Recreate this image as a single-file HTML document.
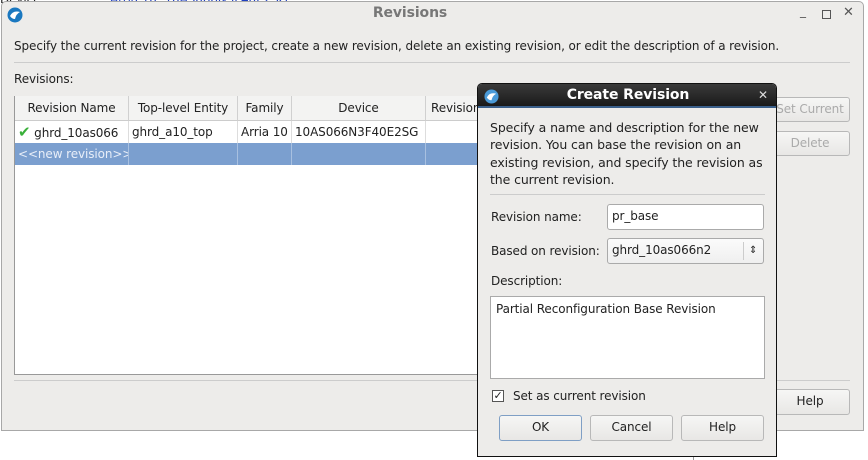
<!DOCTYPE html>
<html><head><style>
*{box-sizing:border-box;margin:0;padding:0}
body{width:868px;height:460px;background:#fff;position:relative;overflow:hidden;font-family:"DejaVu Sans","Liberation Sans",sans-serif;font-size:12px;letter-spacing:-0.1px;color:#222}
.a{position:absolute}
.win{left:1px;top:1px;width:863px;height:430px;background:#edecea;border:1px solid #a8a8a8;border-radius:5px 5px 0 0}
.btn{position:absolute;border:1px solid #b8b8b8;border-radius:3px;background:linear-gradient(#f6f6f5,#e8e7e5);text-align:center;line-height:23px}
.dis{color:#aaa}
.hd{position:absolute;top:96px;height:25px;line-height:25px;text-align:center;border-right:1px solid #d0d0d0;background:#f3f3f2;border-bottom:1px solid #ccc}
.cell{position:absolute;height:22px;line-height:22px;border-right:1px solid #ddd;padding-left:3px;white-space:nowrap;overflow:hidden}
.inp{position:absolute;background:#fff;border:1px solid #aaa;border-radius:3px}
</style></head><body>
<div class="a" style="left:110px;top:-8px;color:#2040c0;font-size:12px">Arria 10: 10AS066N3F40E2SG</div>
<div class="a" style="left:0;top:-8px;font-size:12px">Device:</div>
<div class="a" style="left:693px;top:430px;width:1px;height:30px;background:#999"></div>
<div class="a win"></div>
<svg class="a" style="left:7px;top:7px" width="16" height="16" viewBox="0 0 16 16"><circle cx="8" cy="8" r="7.5" fill="#1a78c0"/><path d="M3 9 Q6 3 13 5 Q9 7 8 12 Q5 12 3 9Z" fill="#fff"/></svg>
<div class="a" style="left:0;width:820px;top:5px;text-align:center;font-weight:bold;font-size:14px;color:#777">Revisions</div>
<div class="a" style="left:800px;top:4px;color:#555;font-size:12px">_</div>
<div class="a" style="left:822px;top:10px;width:9px;height:9px;border:1px solid #555"></div>
<div class="a" style="left:843px;top:5px;color:#555;font-size:13px">✕</div>
<div class="a" style="left:14px;top:39px">Specify the current revision for the project, create a new revision, delete an existing revision, or edit the description of a revision.</div>
<div class="a" style="left:14px;top:62px;width:836px;height:1px;background:#ccc"></div>
<div class="a" style="left:14px;top:72px">Revisions:</div>
<div class="a" style="left:14px;top:96px;width:470px;height:279px;background:#fff;border:1px solid #999"></div>
<div class="hd" style="left:15px;width:114px">Revision Name</div>
<div class="hd" style="left:129px;width:109px">Top-level Entity</div>
<div class="hd" style="left:238px;width:54px">Family</div>
<div class="hd" style="left:292px;width:134px">Device</div>
<div class="hd" style="left:426px;width:60px;text-align:left;padding-left:5px">Revision</div>
<div class="cell" style="left:15px;top:121px;width:114px;padding-left:3px"><span style="color:#3ab03a;font-weight:bold;font-size:15px">✔</span> ghrd_10as066</div>
<div class="cell" style="left:129px;top:121px;width:109px">ghrd_a10_top</div>
<div class="cell" style="left:238px;top:121px;width:54px">Arria 10</div>
<div class="cell" style="left:292px;top:121px;width:134px">10AS066N3F40E2SG</div>
<div class="a" style="left:15px;top:143px;width:470px;height:22px;background:#7b9fcf"></div>
<div class="cell" style="left:15px;top:143px;width:114px;color:#e8eef8;border-color:#a8c0e0">&lt;&lt;new revision&gt;&gt;</div>
<div class="cell" style="left:129px;top:143px;width:109px;border-color:#a8c0e0"></div>
<div class="cell" style="left:238px;top:143px;width:54px;border-color:#a8c0e0"></div>
<div class="cell" style="left:292px;top:143px;width:134px;border-color:#a8c0e0"></div>
<div class="a" style="left:14px;top:380px;width:836px;height:1px;background:#ccc"></div>
<div class="btn dis" style="left:770px;top:97px;width:80px;height:25px">Set Current</div>
<div class="btn dis" style="left:770px;top:131px;width:80px;height:25px">Delete</div>
<div class="btn" style="left:770px;top:389px;width:80px;height:26px">Help</div>

<div class="a" style="left:477px;top:83px;width:300px;height:374px;background:#edecea;border:1px solid #111;border-radius:5px 5px 0 0;overflow:hidden">
<div class="a" style="left:0;top:0;width:300px;height:24px;background:linear-gradient(#3a3a3a,#1a1a1a);border-bottom:2px solid #3a5f8a"></div>
<svg class="a" style="left:6px;top:5px" width="15" height="15" viewBox="0 0 16 16"><circle cx="8" cy="8" r="7.5" fill="#4a9ad8"/><path d="M3 9 Q6 3 13 5 Q9 7 8 12 Q5 12 3 9Z" fill="#fff"/></svg>
<div class="a" style="left:0;width:300px;top:3px;text-align:center;color:#fff;font-weight:bold;font-size:14px">Create Revision</div>
<div class="a" style="left:280px;top:4px;color:#ddd;font-size:12px">✕</div>
<div class="a" style="left:12px;top:35px;line-height:17.3px;width:280px;font-size:12.5px">Specify a name and description for the new revision. You can base the revision on an existing revision, and specify the revision as the current revision.</div>
<div class="a" style="left:12px;top:110px;width:275px;height:1px;background:#ccc"></div>
<div class="a" style="left:13px;top:126px">Revision name:</div>
<div class="inp" style="left:129px;top:120px;width:157px;height:26px;padding:4px 0 0 4px">pr_base</div>
<div class="a" style="left:13px;top:160px">Based on revision:</div>
<div class="inp" style="left:129px;top:154px;width:157px;height:26px;padding:4px 0 0 4px;background:linear-gradient(#fbfbfb,#efefef)">ghrd_10as066n2<span class="a" style="left:135px;top:3px;height:18px;border-left:1px solid #ccc;padding-left:5px;font-size:10px;line-height:18px">⇕</span></div>
<div class="a" style="left:13px;top:190px">Description:</div>
<div class="a" style="left:12px;top:212px;width:275px;height:83px;background:#fff;border:1px solid #aaa;padding:5px 5px">Partial Reconfiguration Base Revision</div>
<div class="a" style="left:14px;top:306px;width:12px;height:12px;border:1px solid #555;background:#fff;font-size:11px;line-height:10px;text-align:center">✓</div>
<div class="a" style="left:35px;top:305px">Set as current revision</div>
<div class="btn" style="left:21px;top:331px;width:83px;height:26px;border-color:#7f9fc5">OK</div>
<div class="btn" style="left:112px;top:331px;width:83px;height:26px">Cancel</div>
<div class="btn" style="left:203px;top:331px;width:83px;height:26px">Help</div>
</div>
</body></html>
